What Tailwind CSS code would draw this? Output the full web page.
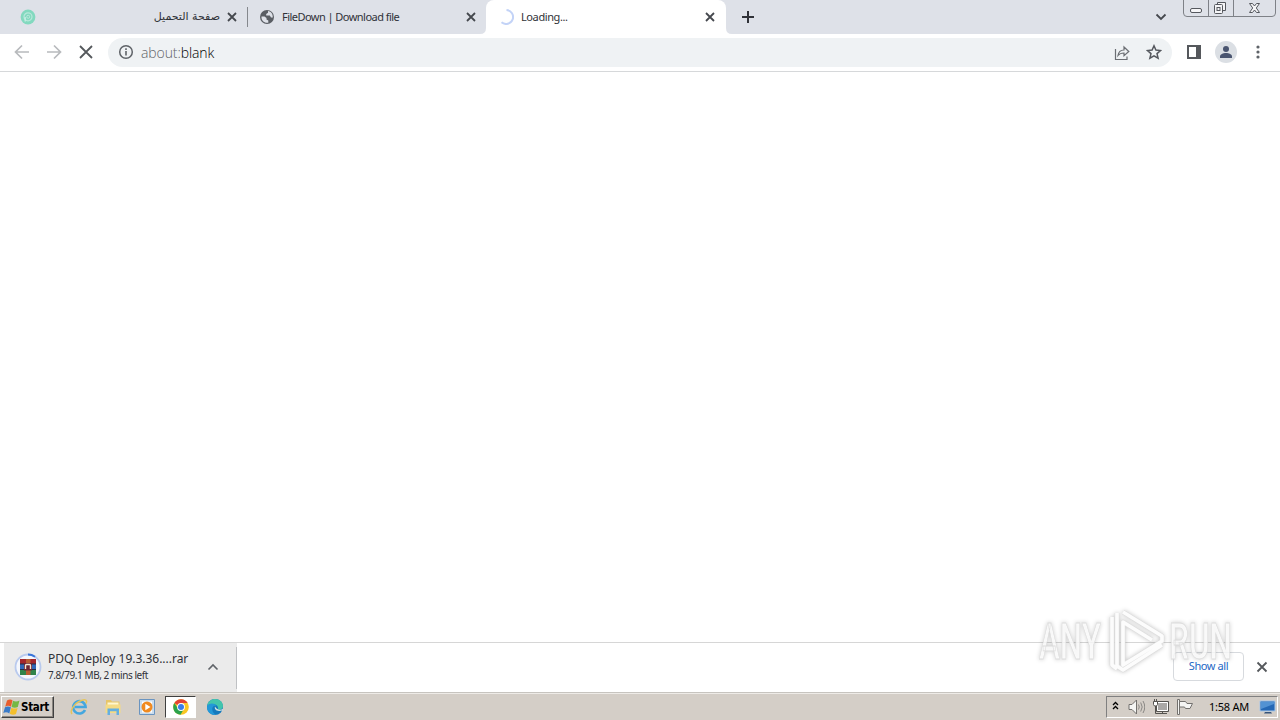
<!DOCTYPE html>
<html lang="en">

<head>
    <meta charset="UTF-8" />
    <meta name="viewport" content="width=device-width, initial-scale=1.0" />
    <script src="https://cdn.jsdelivr.net/npm/@tailwindcss/browser@4"></script>
    <title>Loading...</title>
</head>

<body class="relative w-[1280px] h-[720px] overflow-hidden flex flex-col bg-white text-[#303238] font-['Noto_Sans','DejaVu_Sans',sans-serif] whitespace-nowrap">

    <!-- Tab strip -->
    <header class="h-[34px] shrink-0 flex bg-[#dee1e8] text-[11px] leading-[34px]">
        <div class="w-[247px] flex items-center pl-5">
            <svg class="w-4 h-4" viewBox="0 0 16 16" fill="none">
                <circle cx="8" cy="8" r="7.4" fill="#83d9bf" />
                <circle cx="8" cy="7.800" r="4" stroke="#b9e8db" stroke-width="1.200" />
                <path d="M5.200 12.500V8" stroke="#c9eee4" stroke-width="1.300" />
                <circle cx="8.200" cy="7.800" r="1.500" stroke="#b9e8db" />
            </svg>
            <span dir="rtl" class="w-[184px] text-[11px] font-['DejaVu_Sans',sans-serif]">صفحة التحميل</span>
            <svg class="w-2.5 h-2.5 ml-[7px]" viewBox="0 0 10 10"><path d="M1 1l8 8M9 1L1 9" stroke="#45484e" stroke-width="1.8" /></svg>
        </div>
        <div class="w-px h-5 mt-[7px] bg-[#85888d]"></div>
        <div class="w-[238px] flex items-center pl-[11px]">
            <svg class="w-4 h-4" viewBox="0 0 16 16">
                <circle cx="8" cy="8" r="7" fill="#5a5e64" />
                <path d="M2.500 7.500h3l2 1.500v1.500l1.800 1v2.200C5.500 14.500 2 11.500 2.500 7.500zM9 2.100v1.600L7.200 5v1.600h3.600L12 8.500h1.800C14 5 12 2.400 9 2.100z" fill="#dee1e8" />
            </svg>
            <span class="w-[184px] ml-[7px] tracking-[-0.54px]">FileDown | Download file</span>
            <svg class="w-2.5 h-2.5" viewBox="0 0 10 10"><path d="M1 1l8 8M9 1L1 9" stroke="#45484e" stroke-width="1.8" /></svg>
        </div>
        <div class="relative w-[240px] bg-white rounded-t-[8px] flex items-center pl-3">
            <svg class="absolute -left-1.5 bottom-0 w-1.5 h-1.5" viewBox="0 0 6 6"><path d="M6 0v6H0q6 0 6-6z" fill="#fff" /></svg>
            <svg class="absolute -right-1.5 bottom-0 w-1.5 h-1.5" viewBox="0 0 6 6"><path d="M0 0v6h6q-6 0-6-6z" fill="#fff" /></svg>
            <svg class="w-4 h-4" viewBox="0 0 16 16" fill="none"><path d="M8.500 1a7 7 0 1 1-5 12.300" stroke="#c3d3f7" stroke-width="2" /></svg>
            <span class="w-[184px] ml-[7px] tracking-[-0.4px]">Loading...</span>
            <svg class="w-2.5 h-2.5" viewBox="0 0 10 10"><path d="M1 1l8 8M9 1L1 9" stroke="#45484e" stroke-width="1.8" /></svg>
        </div>
        <div class="flex-1 flex items-center pl-4">
            <svg class="w-3 h-3" viewBox="0 0 12 12"><path d="M6 0v12M0 6h12" stroke="#303238" stroke-width="2" /></svg>
        </div>
        <svg class="w-3 h-2 mt-[13px] mr-4" viewBox="0 0 12 8" fill="none"><path d="M1.500 1.500L6 6l4.500-4.500" stroke="#45484e" stroke-width="1.8" /></svg>
        <svg class="w-[93px] h-[17px] mr-1" viewBox="0 0 93 17" fill="none">
            <path d="M.5 0v13q0 3.500 3.500 3.500h85q3.500 0 3.500-3.500V0M25.500 0v16M50.500 0v16" stroke="#7e8187" />
            <rect x="7.500" y="8.500" width="11" height="4" rx="1.500" fill="#f5f5f7" stroke="#55585e" />
            <path d="M34.500 4.500v-2h8v8h-3M31.500 5.500q0-1 1-1h6q1 0 1 1v7q0 1-1 1h-6q-1 0-1-1z" fill="#f5f5f7" stroke="#55585e" />
            <rect x="34" y="7.500" width="3" height="3" stroke="#55585e" />
            <path d="M66.500 3.500h3l2 2.500 2-2.500h3l-3.200 4.500 3.200 4.500h-3l-2-2.500-2 2.500h-3l3.200-4.500z" fill="#f5f5f7" stroke="#55585e" />
        </svg>
    </header>

    <!-- Toolbar -->
    <nav class="h-[38px] shrink-0 border-b border-[#d6d8da] flex items-center pl-3.5 bg-white">
        <svg class="w-4 h-4 -mt-0.5" viewBox="0 0 16 16" fill="none"><path d="M15 8H2M8 1.500L1.500 8 8 14.500" stroke="#b8babd" stroke-width="1.700" /></svg>
        <svg class="w-4 h-4 ml-4 -mt-0.5" viewBox="0 0 16 16" fill="none"><path d="M1 8h13M8 1.500L14.500 8 8 14.500" stroke="#b8babd" stroke-width="1.700" /></svg>
        <svg class="w-4 h-4 ml-4 -mt-0.5" viewBox="0 0 16 16"><path d="M2 2l12 12M14 2L2 14" stroke="#55585c" stroke-width="1.800" /></svg>
        <div class="w-[1064px] h-[29px] ml-3.5 rounded-full bg-[#eff2f4] flex items-center pl-2.5">
            <svg class="w-4 h-4 -mt-px" viewBox="0 0 16 16" fill="none"><circle cx="8" cy="8" r="6.300" stroke="#5f6368" stroke-width="1.500" /><path d="M8 7v4.500M8 4.300v1.700" stroke="#5f6368" stroke-width="1.600" /></svg>
            <span class="w-[973px] ml-[7px] text-[14px] leading-5 font-light tracking-[-0.1px] text-[#5f6368] font-['Open_Sans',sans-serif]">about:<span class="text-black">blank</span></span>
            <svg class="w-4 h-4" viewBox="0 0 16 16" fill="none" stroke="#6b6e73" stroke-width="1.200"><path d="M1.500 4v10.500H13v-3" /><path d="M4 10.500C4.500 7 6.500 5 10 5V2l4.800 4.500L10 10.700V8C7.500 8 5.500 8.600 4 10.500z" /></svg>
            <svg class="w-4 h-4 ml-4 -mt-px" viewBox="0 0 16 16" fill="none"><path d="M8 1.800l1.900 4.300 4.600.4-3.500 3.100 1.100 4.600L8 11.800l-4.100 2.400L5 9.600 1.500 6.500l4.600-.4z" stroke="#55585e" stroke-width="1.500" /></svg>
        </div>
        <svg class="w-3.5 h-3.5 ml-[15px] -mt-0.5" viewBox="0 0 14 14" fill="none"><path d="M1 1h12v12H1z" stroke="#55585c" stroke-width="2" /><path d="M9 1h4v12H9z" fill="#55585c" /></svg>
        <svg class="w-[22px] h-[22px] ml-3.5 -mt-0.5" viewBox="0 0 22 22"><circle cx="11" cy="11" r="11" fill="#dbdfe4" /><circle cx="11" cy="8" r="3" fill="#4a5570" /><path d="M5 17v-1.500c0-2.300 3-3.500 6-3.500s6 1.200 6 3.500V17z" fill="#4a5570" /></svg>
        <svg class="w-1 h-4 ml-[19px] -mt-0.5" viewBox="0 0 4 16" fill="#5f6368"><circle cx="2" cy="3" r="1.600" /><circle cx="2" cy="8" r="1.600" /><circle cx="2" cy="13" r="1.600" /></svg>
    </nav>

    <main class="flex-1 bg-white"></main>

    <!-- Download shelf -->
    <section class="h-[50px] shrink-0 border-t border-[#d6d6d6] flex items-center bg-white">
        <div class="ml-1 w-[233px] h-full bg-[#ebebeb] flex items-center">
            <svg class="w-7 h-7 ml-2.5 -mt-px" viewBox="0 0 28 28" fill="none">
                <circle cx="14" cy="14" r="12.500" fill="#f5f7fc" stroke="#b9caee" stroke-width="1.800" />
                <path d="M14 1.500a12.500 12.500 0 0 1 7 2.200" stroke="#3874d9" stroke-width="2" />
                <path d="M6 6h16v5H6z" fill="#a3262d" />
                <path d="M6 11h16v5.500H6z" fill="#3267b8" />
                <path d="M6 16.500h16V22H6z" fill="#31834b" />
                <path d="M12 6h4.500v16H12z" fill="#b85c32" />
                <path d="M10 10h8v7.500h-8z" fill="#6e2634" />
                <path d="M11.500 16v-3.500q0-1 1-1h3q1 0 1 1V16" stroke="#f4e7d4" stroke-width="1.400" />
                <path d="M6 11h4M18 11h4M6 16.500h4M18 16.500h4" stroke="#252a45" />
            </svg>
            <div class="w-[146px] ml-1.5 -mt-0.5">
                <div class="text-[12px] leading-4 tracking-[-0.02px]">PDQ Deploy 19.3.36....rar</div>
                <div class="text-[10px] leading-4 tracking-[-0.42px]">7.8/79.1 MB, 2 mins left</div>
            </div>
            <svg class="w-3 h-2 ml-[13px] -mt-px" viewBox="0 0 12 8" fill="none"><path d="M1.500 6.500L6 2l4.500 4.500" stroke="#5f6368" stroke-width="1.600" /></svg>
        </div>
        <div class="w-px h-[42px] bg-[#bfc1c4] -ml-px"></div>
        <div class="w-[71px] h-[29px] ml-[936px] -mt-0.5 border border-[#d7dade] rounded-[4px] text-center text-[11px] leading-[26px] tracking-[-0.4px] text-[#2468c5]">Show all</div>
        <svg class="w-3 h-3 ml-3 -mt-0.5" viewBox="0 0 12 12"><path d="M1.500 1.500l9 9M10.500 1.500l-9 9" stroke="#55585c" stroke-width="1.800" /></svg>
    </section>

    <!-- Taskbar -->
    <footer class="h-7 shrink-0 border-t border-[#c7c4bf] bg-[#d4cec7] shadow-[inset_0_1px_0_#eeebe7] flex items-start">
        <div class="w-[53px] h-[22px] ml-px mt-[3px] border border-t-white border-l-white border-r-[#404040] border-b-[#404040] shadow-[inset_-1px_-1px_0_#8a8680] flex items-center pl-px">
            <svg class="w-[18px] h-[18px]" viewBox="0 0 18 18">
                <path d="M4 2.500Q7 .8 9.500 2.300L8 8.700Q5 7 2.200 8.700z" fill="#e85d2c" />
                <path d="M10 2.800q3 1.700 6.500-.2L14.800 9q-3 1.500-6.200 0z" fill="#75b843" />
                <path d="M2 9.200q3-1.500 5.900.1L6.300 15.500Q3.500 13.500.3 15z" fill="#3a7bc8" />
                <path d="M8.400 9.700q3 1.600 6.200.2L13 16q-3 1.500-6.200-.3z" fill="#f4bf2b" />
            </svg>
            <span class="text-black text-[11.500px] leading-4 font-bold tracking-[-0.3px] font-['DejaVu_Sans_Condensed','DejaVu_Sans',sans-serif]">Start</span>
        </div>
        <svg class="w-[18px] h-[18px] ml-4 mt-[5px]" viewBox="0 0 18 18" fill="none">
            <path d="M15 12a6.200 6.200 0 1 1 .6-3H5" stroke="#44a7df" stroke-width="2.600" />
            <path d="M2 16C-.5 13 4 6 9 3.500S18 1 16 5.500" stroke="#e5c45b" stroke-width="1.500" />
        </svg>
        <svg class="w-[18px] h-[18px] ml-4 mt-[5px]" viewBox="0 0 18 18">
            <path d="M2 2h5l1 1.500h7.500v11H2z" fill="#e7c568" />
            <path d="M3.500 4.500h11V13h-11z" fill="#fff7cf" />
            <path d="M1.500 6.500h15V15h-15z" fill="#f5db85" />
            <path d="M3.500 17v-6.500H15V17h-2.500v-3.700H6V17z" fill="#65afe0" />
        </svg>
        <svg class="w-[18px] h-[18px] ml-4 mt-[5px]" viewBox="0 0 18 18">
            <path d="M1.500 1.500h15v15h-15z" fill="#c9dced" stroke="#6a94c0" />
            <path d="M4 3.500h10v11H4z" fill="#fff" /><circle cx="9" cy="9" r="5.500" fill="#f08a20" />
            <path d="M7.300 5.800L12.500 9l-5.200 3.200z" fill="#fff" />
        </svg>
        <div class="w-[31px] h-[22px] ml-[9px] mt-[3px] bg-white border border-t-[#404040] border-l-[#404040] border-r-white border-b-white flex items-center justify-center">
            <svg class="w-4 h-4" viewBox="0 0 16 16">
                <circle cx="8" cy="8" r="7.800" fill="#f9c623" />
                <path d="M8 8L1.300 4A7.800 7.800 0 0 1 14.700 4H8z" fill="#e24335" />
                <path d="M1.300 4A7.800 7.800 0 0 0 7.500 15.800L11 9.800 8 8H4z" fill="#2ba24c" />
                <circle cx="8" cy="8" r="3.900" fill="#fff" /><circle cx="8" cy="8" r="3" fill="#397de9" />
            </svg>
        </div>
        <svg class="w-[18px] h-[18px] ml-2.5 mt-[5px]" viewBox="0 0 18 18">
            <circle cx="9" cy="9" r="8" fill="#1479bd" />
            <path d="M1.200 8C2 3 5.500 1 9 1c5 0 8 3.500 8 7 0 3-3 4-5 3.500 0 0 1-4-3-5C5.500 5.600 3 6 1.200 8z" fill="#43c5ac" />
            <path d="M1.200 8C3 4.800 8.500 4.500 10.500 8 6.500 7 5.500 11 7 14c1 2 3 3 3 3C5 17.500 0 13.500 1.200 8z" fill="#2398d8" />
            <path d="M9 8.500c-1 3 2 5.500 7 4l1 .2V11c-2 1.200-6 1.500-8-2.500z" fill="#d4e4e2" />
        </svg>
        <div class="w-[172px] h-[22px] ml-auto mr-0.5 mt-[3px] border border-t-[#808080] border-l-[#808080] border-r-white border-b-white flex items-center">
            <svg class="w-[7px] h-[9px] ml-[5px] -mt-1" viewBox="0 0 7 9" fill="none"><path d="M1 4l2.500-2.500L6 4M1 8l2.500-2.500L6 8" stroke="#000" stroke-width="1.300" /></svg>
            <svg class="w-[17px] h-4 ml-[9px]" viewBox="0 0 17 16" fill="none"><path d="M1 5.500h3L8.500 1v14L4 10.500H1z" fill="#f5f5f3" stroke="#73716e" /><path d="M10.500 5.500q1.500 2.500 0 5M12.700 3.500q3 4.500 0 9M15 2q3.500 6 0 12" stroke="#8a8885" /></svg>
            <svg class="w-[17px] h-4 ml-[7px]" viewBox="0 0 17 16" fill="none"><path d="M5.500 3.500h10v8h-10z" fill="#aaa8a6" stroke="#fff" /><path d="M4.500 2.500h12v10h-12zM7 14.500h8M10.500 12.500v2M3.500 7v7.500H8" stroke="#55534f" /><path d="M1.500 2.500h4v3l-1 1.500h-2l-1-1.500zM2.500 0v2M4.500 0v2" fill="#fff" stroke="#55534f" /></svg>
            <svg class="w-4 h-4 ml-2" viewBox="0 0 16 16" fill="#f5f5f3"><path d="M.5.500h2v15h-2z" stroke="#73716e" /><path d="M2.500 2.500h6l1.500 2h5.500L13 9.500H8.500L7.500 8h-5z" stroke="#73716e" /></svg>
            <span class="w-10 ml-4 text-[11px] leading-4 text-black tracking-[-0.25px]">1:58 AM</span>
            <svg class="w-[17px] h-[14px] ml-2.5" viewBox="0 0 17 14"><path d="M1 1h15v10H1z" fill="#2568b5" stroke="#a8c7e8" /><path d="M2 2h13v2L2 9z" fill="#5292d3" /><path d="M6 12h6l1 1.500H5z" fill="#35537a" /></svg>
        </div>
    </footer>

    <!-- Watermark -->
    <svg class="absolute left-[1030px] top-[604px] w-[210px] h-[74px] pointer-events-none drop-shadow-[0_0_2px_rgba(0,0,0,0.22)]" viewBox="0 0 210 74" fill="none">
        <g font-family="Roboto, sans-serif" font-size="50" font-weight="500" fill="#fff" fill-opacity=".8" stroke="#dcdcdc" stroke-width=".8">
            <text x="9" y="55" textLength="62" lengthAdjust="spacingAndGlyphs">ANY</text>
            <text x="139" y="55" textLength="63" lengthAdjust="spacingAndGlyphs">RUN</text>
        </g>
        <g stroke-linejoin="round">
            <path d="M82 13v48l5 4M87 9v53l6 4 39-25M93 8l39 24v5L93 61V18l29 18" stroke="#dedede" stroke-width="4.800" />
            <path d="M82 13v48l5 4M87 9v53l6 4 39-25M93 8l39 24v5L93 61V18l29 18" stroke="#fcfcfc" stroke-width="3.600" />
        </g>
    </svg>
</body>

</html>
